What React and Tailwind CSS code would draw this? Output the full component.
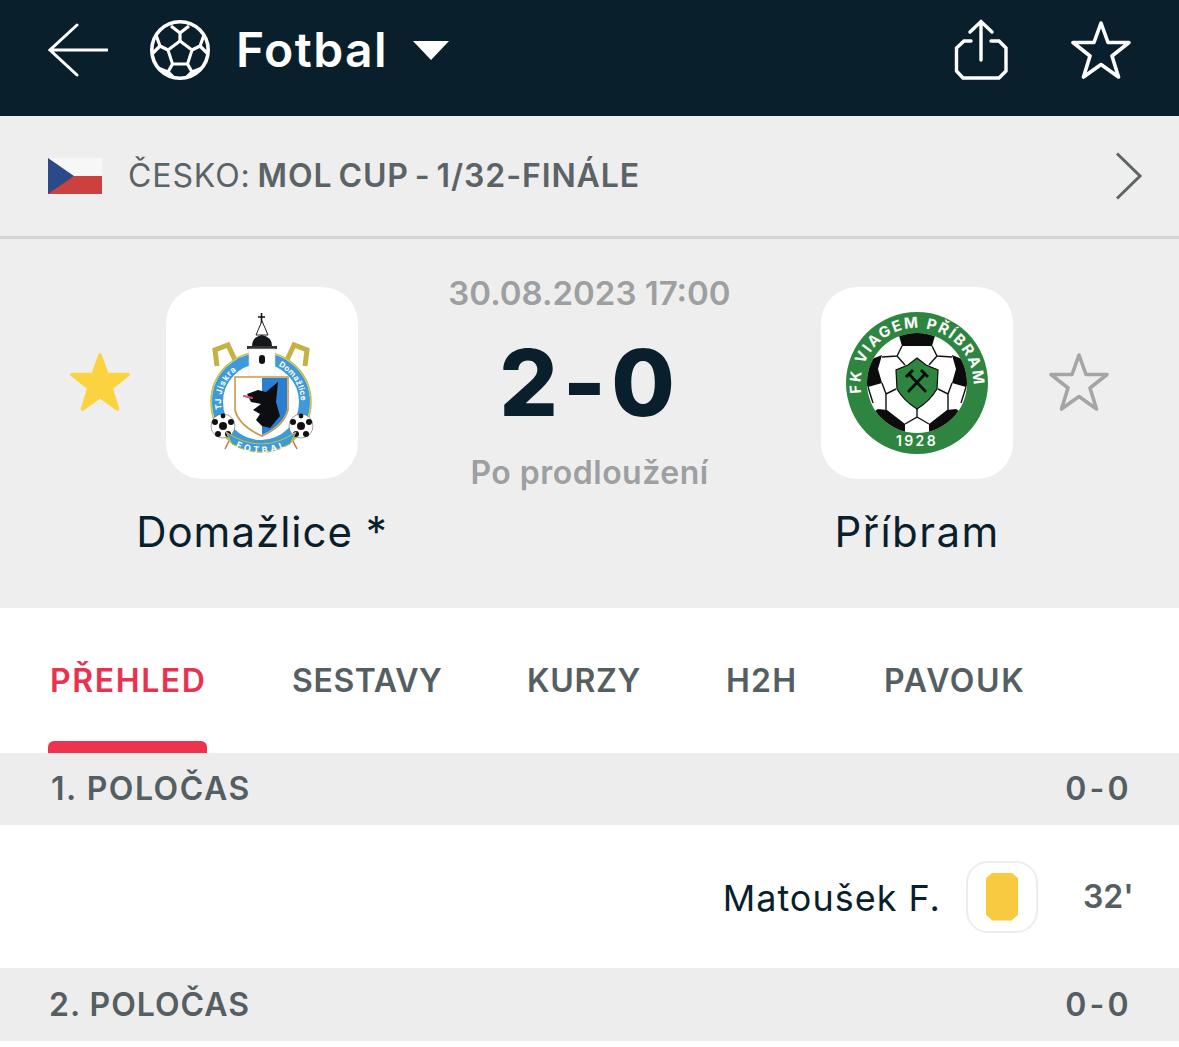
import React from "react";

const font = { fontFamily: "Inter, sans-serif" };

const BackIcon = () => (
  <svg width="60" height="56" viewBox="0 0 60 56" fill="none" stroke="#fff" strokeWidth="3" strokeLinecap="round" strokeLinejoin="miter">
    <path d="M29 3 L2 28 L29 53 M2 28 H59" />
  </svg>
);

const BallIcon = () => (
  <svg width="60" height="60" viewBox="0 0 60 60" fill="none" stroke="#fff" strokeWidth="3.2" strokeLinejoin="round">
    <circle cx="30" cy="30" r="28.2" strokeWidth="3.6" />
    <path d="M30 21 L42 30 L37.5 44 L22.5 44 L18 30 Z" strokeWidth="3" />
    <path d="M30 21 V13 L21 6 M30 13 L39 6" />
    <path d="M42 30 L50 26 L54 15 M50 26 L58 34" />
    <path d="M18 30 L10 26 L6 15 M10 26 L2 34" />
    <path d="M37.5 44 L42 52 L52 48 M42 52 L36 58" />
    <path d="M22.5 44 L18 52 L8 48 M18 52 L24 58" />
  </svg>
);

const ShareIcon = () => (
  <svg width="54" height="62" viewBox="0 0 54 62" fill="none" stroke="#fff" strokeWidth="3.4" strokeLinecap="round">
    <path d="M17 22 H10 L2.5 29 V52 L9 59 H45 L52 52 V29 L45 22 H37" strokeLinejoin="miter" />
    <path d="M27 41 V3 M16 13 L27 2.5 L38 13" />
  </svg>
);

const StarIcon = ({ color = "#fff", fill = "none", size = 60 }) => (
  <svg width={size} height={size} viewBox="0 0 60 60" fill={fill} stroke={color} strokeWidth="3.6" strokeLinejoin="round">
    <path d="M30 3 L37 22.5 H58 L41 36 L47.5 57 L30 44.5 L12.5 57 L19 36 L2 22.5 H23 Z" />
  </svg>
);

const CzechFlag = () => (
  <svg width="54" height="36" viewBox="0 0 54 36">
    <rect width="54" height="18" fill="#f7f7f8" />
    <rect y="18" width="54" height="18" fill="#cc4040" />
    <path d="M0 0 L26 18 L0 36 Z" fill="#2a4a8a" />
  </svg>
);

const SmallBall = ({ x, y }) => (
  <g>
    <circle cx={x} cy={y} r="12" fill="#fff" stroke="#444" strokeWidth="0.5" />
    <circle cx={x} cy={y} r="4" fill="#111" />
    <circle cx={x - 8} cy={y - 4} r="3" fill="#111" />
    <circle cx={x + 8} cy={y - 4} r="3" fill="#111" />
    <circle cx={x - 5} cy={y + 8} r="3" fill="#111" />
    <circle cx={x + 5} cy={y + 8} r="3" fill="#111" />
    <circle cx={x} cy={y - 10} r="2.4" fill="#111" />
  </g>
);

const DomazliceLogo = () => (
  <svg width="120" height="146" viewBox="0 0 120 146">
    <defs>
      <path id="domLeft" d="M21 104 A40 40 0 0 1 45 54.5" />
      <path id="domRight" d="M73 54.5 A40 40 0 0 1 97 104" />
      <path id="domRibbon" d="M26 124 Q59 148 92 124" />
    </defs>
    {/* horns */}
    <path d="M15 56 L13 40 L26 35 L33 50" fill="none" stroke="#c4b243" strokeWidth="5" />
    <path d="M103 56 L105 40 L92 35 L85 50" fill="none" stroke="#c4b243" strokeWidth="5" />
    {/* ring */}
    <circle cx="59" cy="92" r="50" fill="#fff" stroke="#c9c03f" strokeWidth="1.6" />
    <circle cx="59" cy="92" r="43.5" fill="none" stroke="#3e9ad8" strokeWidth="11" />
    <text fill="#fff" fontSize="8.5" fontWeight="700" letterSpacing="0.8" style={font}>
      <textPath href="#domLeft" startOffset="8%">TJ Jiskra</textPath>
    </text>
    <text fill="#fff" fontSize="8" fontWeight="700" letterSpacing="0.3" style={font}>
      <textPath href="#domRight" startOffset="6%">Domažlice</textPath>
    </text>
    {/* tower */}
    <path d="M59.5 3 V13 M56 7 H63" stroke="#111" strokeWidth="1.6" />
    <path d="M60 11 L54 25 H66 Z" fill="#fff" stroke="#222" strokeWidth="1" />
    <path d="M50 36 Q50 27 60 25 Q70 27 70 36 Z" fill="#14181c" />
    <rect x="45" y="36" width="30" height="3" fill="#333" />
    <rect x="47" y="39" width="26" height="27" fill="#fff" stroke="#ddd" strokeWidth="0.6" />
    <rect x="57" y="45" width="6" height="9" rx="3" fill="#111" />
    {/* shield */}
    <path d="M33 67 H86 V100 Q82 116 60 126 Q37 116 33 100 Z" fill="#fff" stroke="#c79a4a" strokeWidth="1.6" />
    <path d="M60 68 H85 V100 Q81 115 60 125 Z" fill="#2b7fd0" />
    {/* wolf */}
    <path d="M45 84 L56 80 L64 82 L76 72 L74 92 L78 106 L68 118 L60 116 L54 110 L58 104 L51 100 L59 94 L49 92 Z" fill="#0c0e12" />
    <path d="M42 86 L50 88" stroke="#d0566f" strokeWidth="2" strokeLinecap="round" />
    <SmallBall x={21} y={116} />
    <SmallBall x={99} y={116} />
    {/* ribbon */}
    <path d="M24 122 Q59 146 94 122 L88 134 Q59 150 30 134 Z" fill="#3e9ad8" stroke="#c9c03f" strokeWidth="1" />
    <path d="M27 131 L23 139 M91 131 L95 139" stroke="#c96a3a" strokeWidth="1.4" />
    <text fill="#fff" fontSize="9" fontWeight="700" letterSpacing="2" dy="7" style={font}>
      <textPath href="#domRibbon" startOffset="17%">FOTBAL</textPath>
    </text>
  </svg>
);

const PribramLogo = () => (
  <svg width="144" height="144" viewBox="0 0 144 144">
    <defs>
      <clipPath id="ballClip">
        <circle cx="72" cy="72" r="50" />
      </clipPath>
      <path id="priTop" d="M16.5 84 A56.5 56.5 0 1 1 127.5 84" />
    </defs>
    <circle cx="72" cy="72" r="71" fill="#2e8540" />
    <circle cx="72" cy="72" r="50" fill="#fff" />
    <g clipPath="url(#ballClip)">
      <path d="M52 18 H92 L87 35 H57 Z" fill="#0c0c0c" />
      <path d="M37 44 L22 50 L18 72 L23 76 L37 72 L33 58 Z" fill="#0c0c0c" />
      <path d="M107 44 L122 50 L126 72 L121 76 L107 72 L111 58 Z" fill="#0c0c0c" />
      <path d="M33 98 L42 99 L60 113 L60 124 L30 124 L24 104 Z" fill="#0c0c0c" />
      <path d="M111 98 L102 99 L84 113 L84 124 L114 124 L120 104 Z" fill="#0c0c0c" />
      <path d="M57 35 L52 45 L37 46 M87 35 L92 45 L107 46 M37 72 L41 83 L51 78 M107 72 L103 83 L93 78 M41 83 L41 100 M103 83 L103 100 M72 96 V106 L60 113 M72 106 L84 113 M23 76 L28 92 M121 76 L116 92" fill="none" stroke="#111" strokeWidth="1.4" />
      <path d="M52 45 L60 54 M92 45 L84 54" stroke="#111" strokeWidth="1.4" />
    </g>
    <path d="M72 47 L81 54 L93 59 L92 78 Q85 90 72 98 Q59 90 52 78 L51 59 L63 54 Z" fill="#2e8540" stroke="#0c0c0c" strokeWidth="1.2" />
    <path d="M64 63 L81 81 M80 63 L63 81" stroke="#0c0c0c" strokeWidth="2.6" />
    <path d="M61 66 L68 59 M83 66 L76 59" stroke="#0c0c0c" strokeWidth="3" />
    <text fill="#fff" fontSize="15" fontWeight="700" style={font}>
      <textPath href="#priTop" startOffset="1%" textLength="186" lengthAdjust="spacing">FK VIAGEM PŘÍBRAM</textPath>
    </text>
    <text x="72" y="135" textAnchor="middle" fill="#fff" fontSize="14" fontWeight="600" letterSpacing="2.4" style={font}>1928</text>
  </svg>
);

const tabs = [
  { label: "PŘEHLED", width: "w-[159px]", text: "text-[#e8324f] tracking-[1.6px]", active: true },
  { label: "SESTAVY", width: "w-[152px]", text: "text-[#555e61] tracking-[0.6px]" },
  { label: "KURZY", width: "w-[116px]", text: "text-[#555e61] tracking-[0.7px]" },
  { label: "H2H", width: "w-[75px]", text: "text-[#555e61] tracking-[1.2px]" },
  { label: "PAVOUK", width: "w-[143px]", text: "text-[#555e61] tracking-[1.6px]" },
];

const PeriodHeader = ({ title, score, height = "h-[72px]", titleClass }) => (
  <div className={`${height} bg-[#ededee] flex items-center justify-between pr-[50px] text-[32px] font-semibold text-[#555e61]`}>
    <span className={titleClass}>{title}</span>
    <span className="tracking-[0.5px] [word-spacing:-6px]">{score}</span>
  </div>
);

export default function App() {
  return (
    <div style={font} className="w-[1179px] h-[1047px] bg-white overflow-hidden">
      {/* top bar */}
      <div className="h-[116px] bg-[#0a1f2c] flex items-center pl-[48px] pr-[48px] pb-[16px]">
        <BackIcon />
        <div className="ml-[42px]"><BallIcon /></div>
        <span className="ml-[26px] text-[48px] font-semibold text-white tracking-[1.4px]">Fotbal</span>
        <div className="ml-[25px] w-0 h-0 border-l-[18px] border-r-[18px] border-t-[19px] border-l-transparent border-r-transparent border-t-white" />
        <div className="ml-auto flex items-center gap-[63px]">
          <ShareIcon />
          <StarIcon />
        </div>
      </div>

      {/* league row */}
      <div className="h-[123px] bg-[#eeeeee] border-b-[3px] border-[#d2d3d4] flex items-center pl-[48px] pr-[36px]">
        <CzechFlag />
        <span className="ml-[26px] text-[32px] text-[#5b6366] tracking-[0.9px] [word-spacing:-3px]">
          ČESKO: <span className="font-semibold">MOL CUP - 1/32-FINÁLE</span>
        </span>
        <svg className="ml-auto" width="28" height="48" viewBox="0 0 28 48" fill="none" stroke="#5f6466" strokeWidth="3">
          <path d="M2 1.5 L25 24 L2 46.5" />
        </svg>
      </div>

      {/* match */}
      <div className="h-[369px] bg-[#eeeeee] flex">
        <div className="w-[166px] h-[286px] flex items-center justify-center pl-[34px]">
          <StarIcon color="#fbd33f" fill="#fbd33f" />
        </div>
        <div className="w-[192px] pt-[48px] flex flex-col items-center">
          <div className="w-[192px] h-[192px] bg-white rounded-[36px] flex items-center justify-center">
            <DomazliceLogo />
          </div>
          <span className="mt-[21px] text-[42px] text-[#0a1f2c] tracking-[1px] whitespace-nowrap">Domažlice *</span>
        </div>
        <div className="w-[463px] flex flex-col items-center pt-[32px]">
          <span className="text-[33px] font-semibold text-[#9d9fa1] tracking-[0px] leading-[44px]">30.08.2023 17:00</span>
          <span className="text-[92px] font-extrabold text-[#0a1f2c] leading-[96px] mt-[20px] tracking-[5px]">2-0</span>
          <span className="mt-[21px] text-[32px] font-semibold text-[#9d9fa1] tracking-[0.5px] leading-[42px]">Po prodloužení</span>
        </div>
        <div className="w-[192px] pt-[48px] flex flex-col items-center">
          <div className="w-[192px] h-[192px] bg-white rounded-[36px] flex items-center justify-center">
            <PribramLogo />
          </div>
          <span className="mt-[21px] text-[42px] text-[#0a1f2c] tracking-[1.4px] whitespace-nowrap">Příbram</span>
        </div>
        <div className="w-[166px] h-[286px] flex items-center justify-start pl-[36px]">
          <StarIcon color="#a3a5a7" />
        </div>
      </div>

      {/* tabs */}
      <div className="h-[145px] bg-white flex pl-[48px] gap-[83px]">
        {tabs.map((tab) => (
          <div key={tab.label} className={`${tab.width} flex flex-col justify-between`}>
            <span className={`pt-[49px] px-[2px] text-[32px] font-semibold whitespace-nowrap ${tab.text}`}>
              {tab.label}
            </span>
            {tab.active && <div className="h-[12px] bg-[#ee334e] rounded-t-[6px]" />}
          </div>
        ))}
      </div>

      <PeriodHeader title="1. POLOČAS" score="0 - 0" titleClass="pl-[51px] tracking-[1.5px]" />

      {/* incident */}
      <div className="h-[143px] bg-white flex items-center justify-end pr-[47px]">
        <span className="text-[36px] text-[#0a1f2c] tracking-[1px] pt-[3px]">Matoušek F.</span>
        <div className="ml-[25px] w-[72px] h-[72px] rounded-[22px] border-2 border-[#ededee] flex items-center justify-center">
          <div className="w-[32px] h-[48px] bg-[#f8ca40] [clip-path:polygon(20%_0,80%_0,100%_12%,100%_88%,80%_100%,20%_100%,0_88%,0_12%)]" />
        </div>
        <span className="ml-[45px] w-[49px] text-[32px] font-semibold text-[#555e61] tracking-[0px]">32'</span>
      </div>

      <PeriodHeader title="2. POLOČAS" score="0 - 0" height="h-[73px]" titleClass="pl-[49px] tracking-[1px]" />
    </div>
  );
}
